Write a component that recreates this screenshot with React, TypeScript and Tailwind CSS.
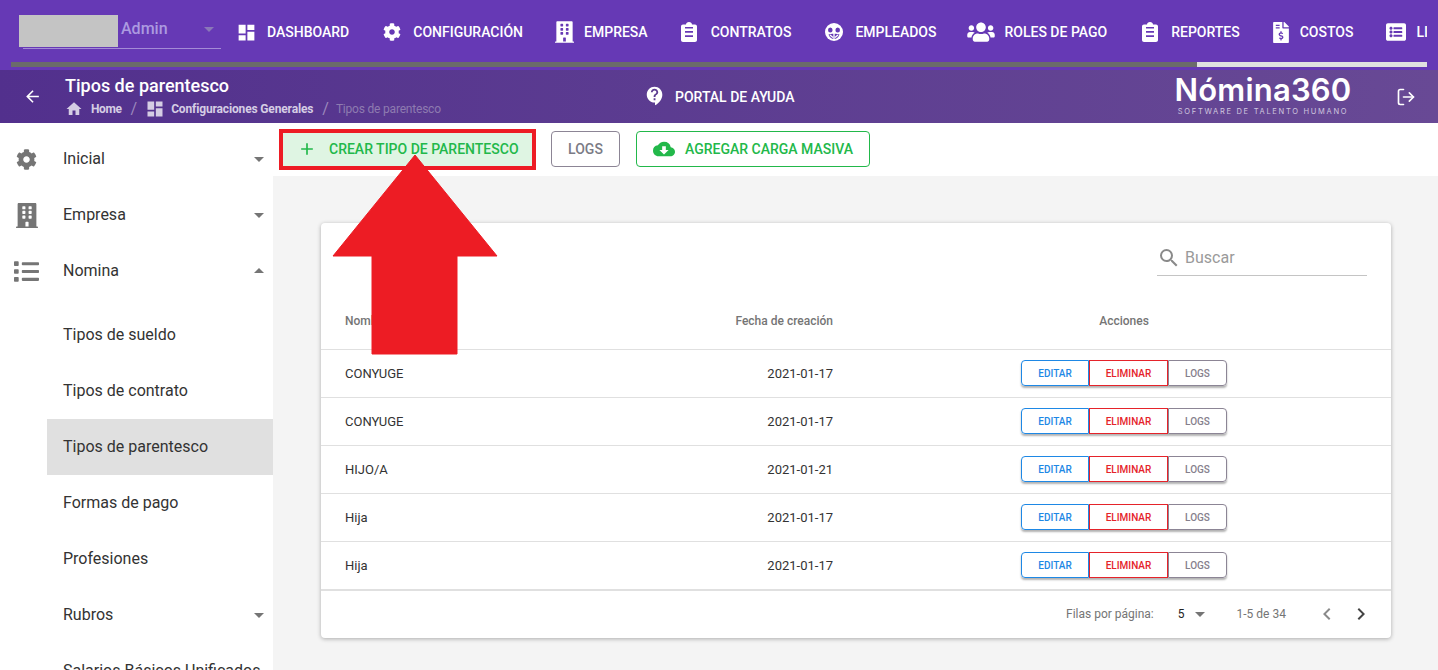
import React from "react";
import {
  MdDashboard, MdHome, MdArrowBack, MdSearch, MdAdd, MdChevronLeft, MdChevronRight,
  MdArrowDropDown, MdArrowDropUp, MdCloudDownload, MdContactSupport,
} from "react-icons/md";
import { FaBuilding, FaCog, FaUsers, FaFileInvoiceDollar, FaListAlt, FaList } from "react-icons/fa";
import { LogOut } from "lucide-react";

function ClipboardIcon() {
  return (
    <svg viewBox="0 0 16 20" className="w-[16px] h-[20px]" fill="currentColor">
      <path fillRule="evenodd" d="M5 2.5C5 1 6.3 0 8 0s3 1 3 2.5h3c1.1 0 2 .9 2 2V18c0 1.1-.9 2-2 2H2c-1.1 0-2-.9-2-2V4.500c0-1.100.9-2 2-2h3zM4 5h8v1.600H4V5zm0 4h8v1.800H4V9zm0 4.200h8V15H4v-1.800z" />
    </svg>
  );
}

function FaceIcon() {
  return (
    <svg viewBox="0 0 18 18" className="w-[18px] h-[18px]">
      <circle cx="9" cy="9" r="9" fill="currentColor" />
      <ellipse cx="5.300" cy="7" rx="2.300" ry="2.500" fill="#6639b5" />
      <ellipse cx="12.700" cy="7" rx="2.300" ry="2.500" fill="#6639b5" />
      <path d="M3.500 11.500 C6 10.500 12 10.500 14.500 11.500 C13.500 14.500 11 16 9 16 C7 16 4.500 14.500 3.500 11.500 Z" fill="#6639b5" />
      <path d="M9 3.500 V16 M5 12 L8 14.500 M13 12 L10 14.500" stroke="currentColor" strokeWidth="1.300" fill="none" />
    </svg>
  );
}

const nav = [
  { label: "DASHBOARD", ml: "ml-[16px]", gap: "ml-[12px]", w: "w-[18px]", icon: <MdDashboard className="w-[21px] h-[21px] shrink-0" /> },
  { label: "CONFIGURACIÓN", ml: "ml-[34px]", gap: "ml-[12px]", w: "w-[18px]", icon: <FaCog className="w-[18px] h-[18px] shrink-0" /> },
  { label: "EMPRESA", ml: "ml-[33px]", gap: "ml-[11px]", w: "w-[17px]", icon: <FaBuilding className="w-[19px] h-[22px] shrink-0" /> },
  { label: "CONTRATOS", ml: "ml-[33px]", gap: "ml-[14px]", w: "w-[16px]", icon: <ClipboardIcon /> },
  { label: "EMPLEADOS", ml: "ml-[34px]", gap: "ml-[12px]", w: "w-[18px]", icon: <FaceIcon /> },
  { label: "ROLES DE PAGO", ml: "ml-[31px]", gap: "ml-[9px]", w: "w-[28px]", icon: <FaUsers className="w-[28px] h-[22px] shrink-0" /> },
  { label: "REPORTES", ml: "ml-[35px]", gap: "ml-[13px]", w: "w-[16px]", icon: <ClipboardIcon /> },
  { label: "COSTOS", ml: "ml-[34px]", gap: "ml-[11px]", w: "w-[15px]", icon: <FaFileInvoiceDollar className="w-[16px] h-[21px] shrink-0" /> },
  { label: "LI", ml: "ml-[32px]", gap: "ml-[10px]", w: "w-[21px]", icon: <FaListAlt className="w-[22px] h-[20px] shrink-0" /> },
];

const rows = [
  ["CONYUGE", "2021-01-17"],
  ["CONYUGE", "2021-01-17"],
  ["HIJO/A", "2021-01-21"],
  ["Hija", "2021-01-17"],
  ["Hija", "2021-01-17"],
];

function TopBar() {
  return (
    <div className="h-[70px] bg-[#6639b5] shrink-0">
      <div className="flex h-[62px]">
        <div className="relative ml-[23px] w-[198px] h-[49px] shrink-0 border-b border-[#a48bd6]">
          <div className="absolute left-[-4px] top-[15px] w-[99px] h-[32px] bg-[#c4c4c4]" />
          <span className="absolute left-[98px] top-[19px] text-[16px] leading-[20px] font-medium text-[#ac9ae0]">Admin</span>
          <MdArrowDropDown className="absolute right-0 top-[17px] w-[24px] h-[24px] text-[#8a78b8]" />
        </div>
        <div className="flex-1 overflow-hidden flex items-center h-full mr-[11px] pt-[2px]">
          {nav.map((n) => (
            <div key={n.label} className={`flex items-center shrink-0 text-white ${n.ml}`}>
              <div className={`flex justify-center ${n.w}`}>{n.icon}</div>
              <span className={`text-[14px] font-medium leading-none ${n.gap}`}>{n.label}</span>
            </div>
          ))}
        </div>
      </div>
      <div className="mx-[11px] h-[5px] flex">
        <div className="w-[1186px] bg-[#6b6b6b]" />
        <div className="flex-1 bg-[#e0e0e0]" />
      </div>
    </div>
  );
}

function SubBar() {
  return (
    <div className="h-[53px] shrink-0 flex items-center bg-gradient-to-r from-[#52308d] to-[#684995] text-white">
      <MdArrowBack className="ml-[23px] w-[19px] h-[19px] shrink-0" />
      <div className="ml-[23px] w-[500px] shrink-0 self-start pt-[5px]">
        <div className="text-[18px] font-medium leading-[22px]">Tipos de parentesco</div>
        <div className="flex items-center text-[12px] h-[20px] leading-none mt-[2px]">
          <MdHome className="w-[18px] h-[18px] text-[#d5cde4]" />
          <span className="ml-[8px] font-bold text-[#d5cde4] tracking-[-0.4px]">Home</span>
          <span className="ml-[9px] text-[#9c88bd] text-[16px]">/</span>
          <MdDashboard className="ml-[8px] w-[20px] h-[20px] text-[#d5cde4]" />
          <span className="ml-[6px] font-bold text-[#d5cde4] tracking-[-0.15px]">Configuraciones Generales</span>
          <span className="ml-[9px] text-[#9c88bd] text-[16px]">/</span>
          <span className="ml-[7px] text-[#8e7bb0] tracking-[-0.2px]">Tipos de parentesco</span>
        </div>
      </div>
      <MdContactSupport className="ml-[79px] mt-[-1px] w-[22px] h-[22px] shrink-0" />
      <span className="ml-[9px] mt-[2px] text-[14px] font-medium">PORTAL DE AYUDA</span>
      <div className="ml-auto w-[180px] flex flex-col items-center self-start pt-[7px] font-['Inter']">
        <span className="text-[31px] font-semibold leading-[26px] tracking-[0.2px]">Nómina360</span>
        <span className="text-[7.5px] leading-[8px] tracking-[1.7px] text-[#cfc6df] mt-[5px]">SOFTWARE DE TALENTO HUMANO</span>
      </div>
      <LogOut className="ml-[43px] mr-[22px] w-[20px] h-[20px] shrink-0" strokeWidth={2} />
    </div>
  );
}

function SideItem({ icon, label, caret }: { icon?: React.ReactNode; label: string; caret?: "up" | "down" }) {
  return (
    <div className="relative h-[56px] flex items-center">
      {icon && <div className="absolute left-[14px] w-[25px] flex justify-center text-[#757575]">{icon}</div>}
      <span className="ml-[63px] text-[16px] text-[#333] whitespace-nowrap">{label}</span>
      {caret === "down" && <MdArrowDropDown className="absolute right-[2px] w-[24px] h-[24px] text-[#757575]" />}
      {caret === "up" && <MdArrowDropUp className="absolute right-[2px] w-[24px] h-[24px] text-[#757575]" />}
    </div>
  );
}

function Sidebar() {
  return (
    <div className="w-[273px] shrink-0 pt-[8px] bg-white overflow-hidden">
      <SideItem icon={<FaCog className="w-[21px] h-[21px]" />} label="Inicial" caret="down" />
      <SideItem icon={<FaBuilding className="w-[22px] h-[25px]" />} label="Empresa" caret="down" />
      <SideItem icon={<FaList className="w-[25px] h-[25px]" />} label="Nomina" caret="up" />
      <div className="h-[8px]" />
      <SideItem label="Tipos de sueldo" />
      <SideItem label="Tipos de contrato" />
      <div className="relative h-[56px] flex items-center ml-[47px] bg-[#e0e0e0]">
        <span className="ml-[16px] text-[16px] text-[#333] whitespace-nowrap">Tipos de parentesco</span>
      </div>
      <SideItem label="Formas de pago" />
      <SideItem label="Profesiones" />
      <SideItem label="Rubros" caret="down" />
      <SideItem label="Salarios Básicos Unificados" />
    </div>
  );
}

function Toolbar() {
  return (
    <div className="h-[53px] shrink-0 bg-white flex items-center pl-[6px]">
      <div className="border-[4px] border-[#ed1c24] h-[41px] w-[257px] bg-[#dff5e3] flex items-center mt-[-1px]">
        <MdAdd className="ml-[14px] w-[20px] h-[20px] text-[#22b84a]" />
        <span className="ml-[12px] text-[14px] font-medium text-[#22b84a] whitespace-nowrap">CREAR TIPO DE PARENTESCO</span>
      </div>
      <div className="ml-[15px] w-[69px] h-[36px] border border-[#8c8595] rounded-[4px] flex items-center justify-center text-[14px] font-medium text-[#7b7b85] mt-[-1px]">LOGS</div>
      <div className="ml-[16px] w-[234px] h-[36px] border border-[#22b84a] rounded-[4px] flex items-center text-[14px] font-medium text-[#22b84a] mt-[-1px]">
        <MdCloudDownload className="ml-[16px] w-[22px] h-[22px]" />
        <span className="ml-[10px]">AGREGAR CARGA MASIVA</span>
      </div>
    </div>
  );
}

function ActionButtons() {
  const base = "h-[26px] flex items-center justify-center text-[10px] font-medium border";
  return (
    <div className="flex shadow-[0_2px_2px_rgba(0,0,0,0.3)] rounded-[4px]">
      <div className={`${base} w-[68px] border-[#1e88e5] text-[#1e88e5] rounded-l-[4px]`}>EDITAR</div>
      <div className={`${base} w-[79px] border-[#e5232a] text-[#e5232a]`}>ELIMINAR</div>
      <div className={`${base} w-[59px] border-[#8c8595] text-[#85808c] rounded-r-[4px]`}>LOGS</div>
    </div>
  );
}

function Card() {
  return (
    <div className="ml-[48px] mt-[47px] w-[1070px] h-[415px] bg-white rounded-[4px] shadow-[0_1px_4px_rgba(0,0,0,0.3)] flex flex-col">
      <div className="h-[74px] flex justify-end pr-[24px] shrink-0">
        <div className="w-[210px] h-[54px] mt-[-1px] border-b border-[#c4c4c4] flex items-center self-start">
          <div className="mt-[19px] flex items-center">
            <MdSearch className="w-[24px] h-[24px] text-[#8a8a8a]" />
            <span className="ml-[4px] text-[16px] text-[#9a9a9a]">Buscar</span>
          </div>
        </div>
      </div>
      <div className="h-[53px] pb-[4px] shrink-0 flex items-center text-[12px] font-medium text-[#757575] border-b border-[#e0e0e0]">
        <div className="w-[279px] pl-[24px]">Nombre</div>
        <div className="w-[233px] text-right">Fecha de creación</div>
        <div className="flex-1 ml-[24px] text-center">Acciones</div>
      </div>
      {rows.map((r, i) => (
        <div key={i} className="h-[48px] shrink-0 flex items-center text-[13px] text-[#333] border-b border-[#e0e0e0]">
          <div className="w-[279px] pl-[24px]">{r[0]}</div>
          <div className="w-[233px] text-right">{r[1]}</div>
          <div className="flex-1 ml-[24px] flex justify-center pb-[1px]"><ActionButtons /></div>
        </div>
      ))}
      <div className="flex-1 flex items-center pb-[2px] border-t border-[#e0e0e0] text-[12px] text-[#757575]">
        <span className="ml-[745px]">Filas por página:</span>
        <span className="ml-[24px] text-[#222]">5</span>
        <MdArrowDropDown className="ml-[3px] w-[24px] h-[24px] text-[#757575]" />
        <span className="ml-[25px]">1-5 de 34</span>
        <MdChevronLeft className="ml-[29px] w-[24px] h-[24px] text-[#8a8a8a]" />
        <MdChevronRight className="ml-[10px] w-[24px] h-[24px] text-[#444]" />
      </div>
    </div>
  );
}

export default function App() {
  return (
    <div className="relative h-[670px] w-[1438px] overflow-hidden flex flex-col bg-white font-['Roboto',sans-serif]">
      <TopBar />
      <SubBar />
      <div className="flex flex-1 min-h-0">
        <Sidebar />
        <div className="flex-1 flex flex-col min-w-0">
          <Toolbar />
          <div className="flex-1 bg-[#f4f4f4]">
            <Card />
          </div>
        </div>
      </div>
      <svg className="absolute left-[330px] top-[152px]" width="170" height="205" viewBox="330 152 170 205">
        <path d="M415 155 L497 256 L457 256 L457 354 L372 354 L372 256 L333 256 Z" fill="#ed1c24" stroke="#ed1c24" strokeWidth="1" strokeLinejoin="round" />
      </svg>
    </div>
  );
}
